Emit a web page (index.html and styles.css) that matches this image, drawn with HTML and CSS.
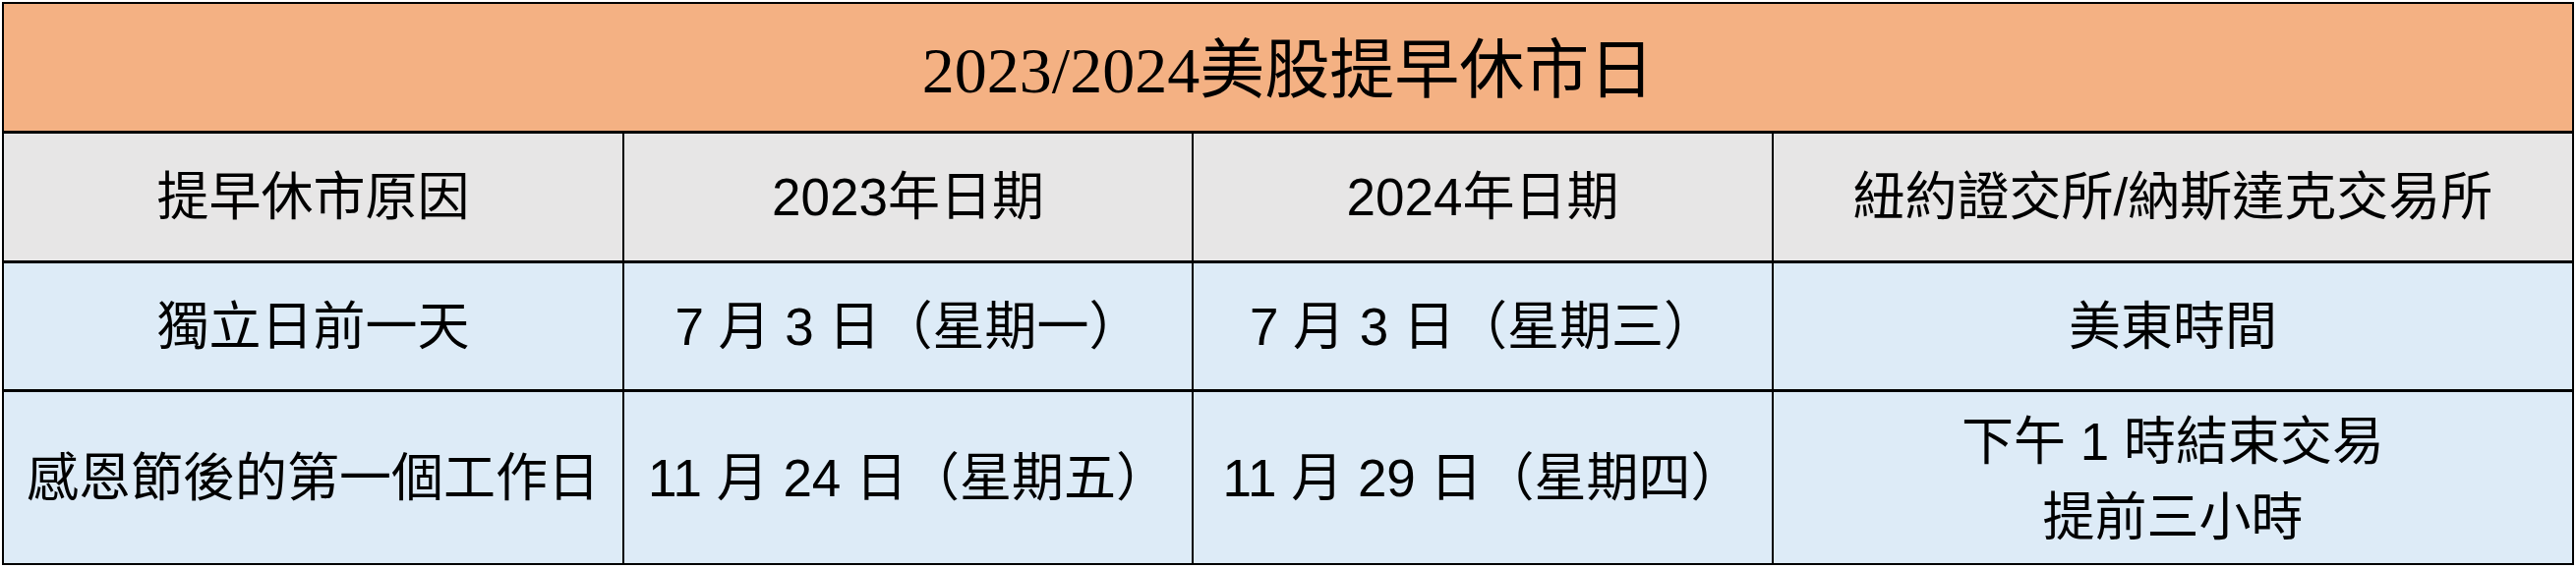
FILE: index.html
```html
<!DOCTYPE html>
<html lang="zh-Hant">
<head>
<meta charset="utf-8">
<title>2023/2024美股提早休市日</title>
<link rel="stylesheet" href="styles.css">
</head>
<body>
<div class="sheet">
  <div class="cell title">2023/2024美股提早休市日</div>

  <div class="cell head">提早休市原因</div>
  <div class="cell head">2023年日期</div>
  <div class="cell head">2024年日期</div>
  <div class="cell head">紐約證交所/納斯達克交易所</div>

  <div class="cell data">獨立日前一天</div>
  <div class="cell data">7 月 3 日（星期一）</div>
  <div class="cell data">7 月 3 日（星期三）</div>
  <div class="cell data">美東時間</div>

  <div class="cell data">感恩節後的第一個工作日</div>
  <div class="cell data">11 月 24 日（星期五）</div>
  <div class="cell data">11 月 29 日（星期四）</div>
  <div class="cell data multi">下午 1 時結束交易<br>提前三小時</div>
</div>
</body>
</html>
```

FILE: styles.css
```css
html, body {
  margin: 0;
  padding: 0;
  background: #ffffff;
}

body {
  padding: 2px 0 0 2px;
}

.sheet {
  width: 2616px;
  box-sizing: border-box;
  display: grid;
  grid-template-columns: 629px 577px 588px 812px;
  grid-template-rows: 129px 129px 128px 174px;
  column-gap: 2px;
  row-gap: 3px;
  padding: 2px;
  background: #000000;
}

.cell {
  display: flex;
  align-items: center;
  justify-content: center;
  text-align: center;
  color: #000000;
  font-family: "Liberation Sans", "Noto Sans CJK TC", sans-serif;
  font-size: 53px;
  line-height: 77px;
  white-space: nowrap;
}

.title {
  grid-column: 1 / -1;
  background: #f4b183;
  font-family: "Liberation Serif", "Noto Sans CJK TC", serif;
  font-size: 66px;
  padding-top: 6px;
  box-sizing: border-box;
}

.head {
  background: #e7e6e6;
}

.data {
  background: #ddebf7;
}

.multi {
  padding-top: 4px;
  box-sizing: border-box;
}
```
